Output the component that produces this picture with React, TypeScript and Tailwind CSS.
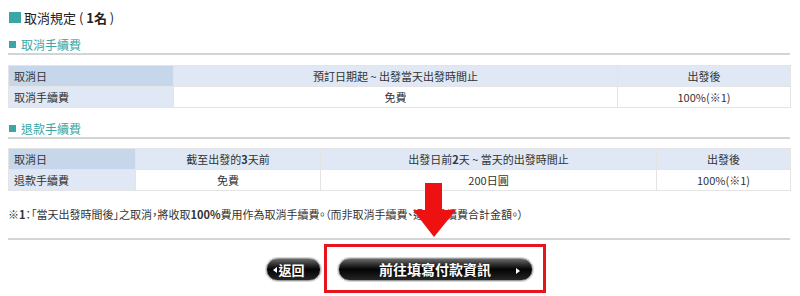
import React from 'react';

const font = { fontFamily: '"Noto Sans CJK TC", "Liberation Sans", sans-serif' };

interface FeeTableProps {
  widths: number[];
  head: React.ReactNode[];
  row: React.ReactNode[];
}

function FeeTable({ widths, head, row }: FeeTableProps) {
  return (
    <table className="w-[782px] table-fixed border-collapse border border-[#dcdcdc] text-[11px] text-[#333]">
      <colgroup>
        {widths.map((w, i) => (
          <col key={i} style={{ width: w }} />
        ))}
      </colgroup>
      <tbody>
        <tr className="h-[21px]">
          {head.map((cell, i) => (
            <td
              key={i}
              className={
                i === 0
                  ? 'border border-[#e4e4e4] bg-[#c6d7ec] px-[5px] text-left'
                  : 'border border-[#e4e4e4] bg-[#dfe8f4] text-center'
              }
            >
              {cell}
            </td>
          ))}
        </tr>
        <tr className="h-[21px]">
          {row.map((cell, i) => (
            <td
              key={i}
              className={
                i === 0
                  ? 'border border-[#e4e4e4] bg-[#dfe8f4] px-[5px] text-left'
                  : 'border border-[#e4e4e4] bg-white text-center'
              }
            >
              {cell}
            </td>
          ))}
        </tr>
      </tbody>
    </table>
  );
}

function SectionTitle({ children }: { children: React.ReactNode }) {
  return (
    <div className="flex h-[17px] items-center gap-[5px] border-b-2 border-[#d4d4d4] pb-[2px] text-[12px] leading-none text-[#3aa7a4]">
      <span className="ml-[1px] inline-block h-[7px] w-[7px] bg-[#3aa7a4]" />
      <span>{children}</span>
    </div>
  );
}

function PillButton({
  children,
  side,
  className,
}: {
  children: React.ReactNode;
  side: 'left' | 'right';
  className: string;
}) {
  return (
    <div
      className={`relative flex h-[23px] items-center rounded-full border border-[#9a9a9a] bg-gradient-to-b from-[#6a6a6a] via-[#050505] to-[#262626] text-[13px] font-bold text-white shadow-[0_0_0_1px_#d8d8d8] ${className}`}
    >
      {side === 'left' && (
        <span className="ml-[6px] mr-[2px] inline-block h-0 w-0 border-y-[3px] border-r-[4px] border-y-transparent border-r-white" />
      )}
      {children}
      {side === 'right' && (
        <span className="absolute right-[12px] top-[9px] inline-block h-0 w-0 border-y-[3px] border-l-[4px] border-y-transparent border-l-white" />
      )}
    </div>
  );
}

export default function App() {
  return (
    <div className="relative h-[296px] w-[800px] overflow-hidden bg-white" style={font}>
      <div className="pl-[8px] pt-[8px]">
        {/* heading */}
        <div className="flex h-[18px] items-center gap-[3px] text-[13px] leading-none text-[#222]">
          <span className="ml-[1px] inline-block h-[11px] w-[12px] bg-[#3aa7a4]" />
          <span>
            取消規定 ( <b>1名</b> )
          </span>
        </div>

        <div className="mt-[12px] w-[782px]">
          <SectionTitle>取消手續費</SectionTitle>
        </div>
        <div className="mt-[10px]">
          <FeeTable
            widths={[165, 444, 173]}
            head={['取消日', '預訂日期起 ~ 出發當天出發時間止', '出發後']}
            row={['取消手續費', '免費', '100%(※1)']}
          />
        </div>

        <div className="mt-[14px] w-[782px]">
          <SectionTitle>退款手續費</SectionTitle>
        </div>
        <div className="mt-[9px]">
          <FeeTable
            widths={[127, 185, 336, 134]}
            head={[
              '取消日',
              <>
                截至出發的<b>3</b>天前
              </>,
              <>
                出發日前<b>2</b>天 ~ 當天的出發時間止
              </>,
              '出發後',
            ]}
            row={['退款手續費', '免費', '200日圓', '100%(※1)']}
          />
        </div>

        <p className="mt-[15px] h-[16px] text-[11px] leading-[16px] text-[#333] [font-feature-settings:'palt']">
          ※<b>1</b>：「當天出發時間後」之取消，將收取<b>100%</b>費用作為取消手續費。（而非取消手續費、退款手續費合計金額。）
        </p>

        <div className="mt-[16px] w-[782px] border-t-2 border-[#d4d4d4]" />
      </div>

      {/* actions */}
      <div className="mt-[18px] flex justify-center gap-[17px] pr-[2px]">
        <PillButton side="left" className="w-[55px]">
          <span>返回</span>
        </PillButton>
        <div className="relative">
          <PillButton side="right" className="w-[195px] justify-center">
            <span className="text-[14px]">前往填寫付款資訊</span>
          </PillButton>
          <div className="pointer-events-none absolute -bottom-[12px] -left-[14px] -right-[13px] -top-[14px] border-[3px] border-[#e8141b]" />
        </div>
      </div>

      {/* pointer arrow */}
      <svg className="absolute left-[412px] top-[182px]" width="45" height="56" viewBox="0 0 45 56">
        <polygon points="13,1 30,1 30,28 44,28 22,55 1,28 13,28" fill="#ee1111" />
      </svg>
    </div>
  );
}
